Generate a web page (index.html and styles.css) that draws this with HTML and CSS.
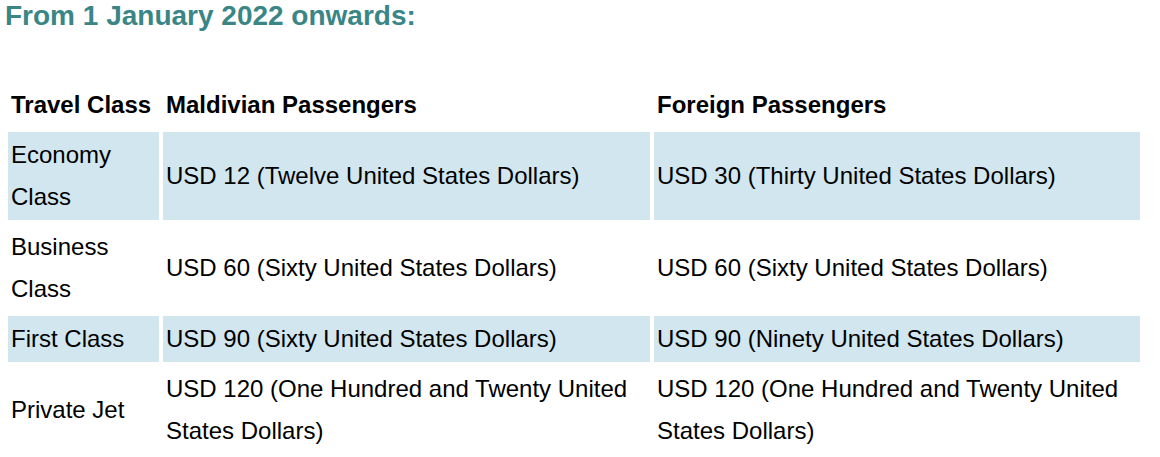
FILE: index.html
```html
<!DOCTYPE html>
<html lang="en">
<head>
<meta charset="utf-8">
<title>Fees</title>
<link rel="stylesheet" href="styles.css">
</head>
<body>
<h2 class="title">From 1 January 2022 onwards:</h2>
<table class="fees">
  <colgroup>
    <col class="c1"><col class="c2"><col class="c3">
  </colgroup>
  <thead>
    <tr><th>Travel Class</th><th>Maldivian Passengers</th><th>Foreign Passengers</th></tr>
  </thead>
  <tbody>
    <tr class="shade"><td>Economy Class</td><td>USD 12 (Twelve United States Dollars)</td><td>USD 30 (Thirty United States Dollars)</td></tr>
    <tr><td>Business Class</td><td>USD 60 (Sixty United States Dollars)</td><td>USD 60 (Sixty United States Dollars)</td></tr>
    <tr class="shade"><td>First Class</td><td>USD 90 (Sixty United States Dollars)</td><td>USD 90 (Ninety United States Dollars)</td></tr>
    <tr><td>Private Jet</td><td>USD 120 (One Hundred and Twenty United States Dollars)</td><td>USD 120 (One Hundred and Twenty United States Dollars)</td></tr>
  </tbody>
</table>
</body>
</html>
```
FILE: styles.css
```css
body {
  margin: 0;
  padding: 0 4px;
  background: #ffffff;
  font-family: "Liberation Sans", Arial, sans-serif;
  color: #000000;
}
.title {
  margin: 0;
  padding: 0 0 0 1px;
  font-size: 28px;
  line-height: 32px;
  font-weight: bold;
  color: #3a8686;
}
.fees {
  margin-top: 46px;
  border-collapse: separate;
  border-spacing: 4px;
  table-layout: fixed;
  width: 1140px;
  font-size: 24px;
  line-height: 42px;
}
.c1 { width: 151px; }
.c2 { width: 487px; }
.c3 { width: 486px; }
.fees th,
.fees td {
  padding: 2px 3px;
  text-align: left;
  vertical-align: middle;
}
.fees th { font-weight: bold; }
.shade td { background: #d2e6ef; }
```
